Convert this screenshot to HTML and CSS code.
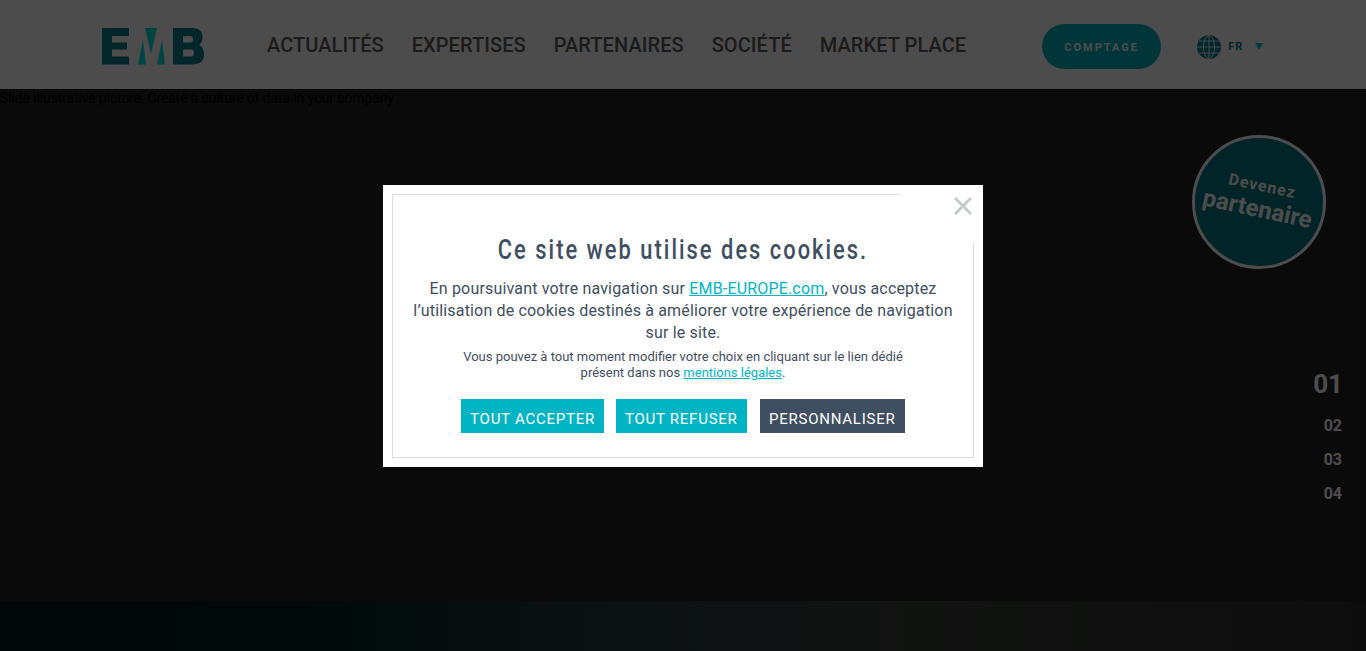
FILE: index.html
```html
<!DOCTYPE html>
<html lang="fr">

<head>
    <meta charset="UTF-8">
    <meta name="viewport" content="width=device-width, initial-scale=1.0">
    <title>EMB</title>
    <link rel="stylesheet" href="styles.css">
</head>

<body>
    <!-- en-tete -->
    <header class="header">
        <svg class="logo" width="103" height="37" viewBox="0 0 103 37">
            <path fill="#08808c" d="M0 0H27V8H10V14.500H25V21.500H10V28.500H27V36.500H0Z" />
            <path fill="#00e0e6" d="M43 0H55L49 26ZM41 12L44 36.500H36ZM60 12L63 36.500H55Z" />
            <path fill="#08808c" d="M71 0H90C98 0 100.500 4 100.500 9C100.500 13 99 16 97 17C100 18 102 21 102 26C102 33 98 36.500 90 36.500H71ZM81 8V14.500H88C90 14.500 91 13.500 91 11.200C91 9 90 8 88 8ZM81 21.500V28.500H89C91 28.500 92 27.500 92 25C92 22.500 91 21.500 89 21.500Z" />
        </svg>
        <nav class="nav">
            <a href="#">ACTUALITÉS</a>
            <a href="#">EXPERTISES</a>
            <a href="#">PARTENAIRES</a>
            <a href="#">SOCIÉTÉ</a>
            <a href="#">MARKET PLACE</a>
        </nav>
        <a class="count-btn" href="#">COMPTAGE</a>
        <div class="lang">
            <svg class="globe" width="24" height="24" viewBox="0 0 24 24">
                <circle cx="12" cy="12" r="12" fill="#08808c" />
                <g fill="none" stroke="#fff" stroke-width=".9">
                    <ellipse cx="12" cy="12" rx="5.500" ry="11.500" />
                    <path d="M12 0V24M0 12H24M2 6H22M2 18H22" />
                </g>
            </svg>
            <span class="lang-code">FR</span>
            <span class="lang-arrow"></span>
        </div>
    </header>

    <!-- slider -->
    <main class="slider">
        <p class="slide-alt">Slide illustrative picture: Create a culture of data in your company</p>
        <a class="partner" href="#">
            <span class="partner-text">
                <span class="partner-small">Devenez</span>
                <span class="partner-big">partenaire</span>
            </span>
        </a>
        <ul class="pager">
            <li class="active">01</li>
            <li>02</li>
            <li>03</li>
            <li>04</li>
        </ul>
        <div class="strip"></div>
    </main>

    <!-- fenetre cookies -->
    <div class="overlay">
        <div class="modal">
            <button class="close" type="button" aria-label="Fermer">
                <svg width="20" height="20" viewBox="0 0 20 20">
                    <path d="M2 2L18 18M18 2L2 18" stroke="#c6cbcd" stroke-width="3" fill="none" />
                </svg>
            </button>
            <div class="modal-box">
                <h2 class="modal-title">Ce site web utilise des cookies.</h2>
                <p class="modal-text">En poursuivant votre navigation sur <a href="#">EMB-EUROPE.com</a>, vous acceptez l’utilisation de cookies destinés à améliorer votre expérience de navigation sur le site.</p>
                <p class="modal-small">Vous pouvez à tout moment modifier votre choix en cliquant sur le lien dédié<br>présent dans nos <a href="#">mentions légales</a>.</p>
                <div class="modal-btns">
                    <a class="btn" href="#">TOUT ACCEPTER</a>
                    <a class="btn" href="#">TOUT REFUSER</a>
                    <a class="btn btn-dark" href="#">PERSONNALISER</a>
                </div>
            </div>
        </div>
    </div>
</body>

</html>
```

FILE: styles.css
```css
* {
    margin: 0;
    padding: 0;
    box-sizing: border-box;
    list-style-type: none;
}

html,
body {
    height: 100%;
    overflow: hidden;
}

body {
    display: flex;
    flex-direction: column;
    font-family: "Roboto", "Liberation Sans", sans-serif;
    background-color: #242424;
}

a {
    text-decoration: none;
}

/* en-tete */
.header {
    display: flex;
    align-items: center;
    flex: none;
    height: 90px;
    padding: 4px 0 0 102px;
    border-bottom: 1px solid #242424;
    background-color: #fff;
}

.logo {
    flex: none;
}

.nav {
    display: flex;
    gap: 28px;
    margin-left: 62px;
    margin-bottom: 4px;
}

.nav a {
    color: #5a5a5a;
    font-size: 20px;
    font-weight: 500;
    letter-spacing: .07px;
    white-space: nowrap;
}

.count-btn {
    display: flex;
    align-items: center;
    justify-content: center;
    width: 119px;
    height: 45px;
    margin-left: 76px;
    padding-top: 2px;
    border-radius: 23px;
    background-color: #00b4c3;
    color: #fff;
    font-size: 11px;
    font-weight: 700;
    letter-spacing: 2px;
}

.lang {
    display: flex;
    align-items: center;
    margin-left: 36px;
}

.lang-code {
    margin-left: 7px;
    color: #08808c;
    font-size: 11px;
    font-weight: 700;
    letter-spacing: 1px;
}

.lang-arrow {
    width: 0;
    height: 0;
    margin-left: 12px;
    border-left: 4.500px solid transparent;
    border-right: 4.500px solid transparent;
    border-top: 7px solid #00c8d8;
}

/* slider */
.slider {
    position: relative;
    flex: 1;
}

.slide-alt {
    color: #000;
    font-size: 14px;
    line-height: 17px;
    letter-spacing: -.13px;
}

.partner {
    position: absolute;
    top: 45px;
    left: 1192px;
    display: flex;
    align-items: center;
    justify-content: center;
    width: 134px;
    height: 134px;
    border: 3px solid #fff;
    border-radius: 50%;
    background-color: #067a85;
    color: #fff;
}

.partner-text {
    display: flex;
    flex-direction: column;
    align-items: center;
    margin-bottom: 7px;
    transform: rotate(12deg);
    font-weight: 700;
}

.partner-small {
    font-size: 16px;
    line-height: 20px;
    letter-spacing: 1px;
}

.partner-big {
    font-size: 24px;
    line-height: 26px;
}

.pager {
    position: absolute;
    top: 276px;
    right: 24px;
    display: flex;
    flex-direction: column;
    align-items: flex-end;
    color: #fff;
    font-size: 16px;
    font-weight: 700;
}

.pager li {
    height: 34px;
    line-height: 34px;
}

.pager .active {
    height: 43px;
    margin-right: -1px;
    font-size: 26px;
    line-height: 36px;
}

.strip {
    position: absolute;
    left: 0;
    right: 0;
    bottom: 0;
    height: 50px;
    background: linear-gradient(to right, #001b1b 0%, #00201f 22%, #28393c 45%, #3c423c 65%, #2b2b2b 100%);
}

/* fenetre cookies */
.overlay {
    position: fixed;
    top: 0;
    left: 0;
    right: 0;
    bottom: 0;
    display: flex;
    justify-content: center;
    padding-top: 185px;
    background-color: rgba(0, 0, 0, .7);
}

.modal {
    position: relative;
    width: 600px;
    height: 282px;
    padding: 9px;
    background-color: #fff;
    color: #3f4e60;
}

.modal-box {
    height: 264px;
    padding: 40px 20px 0;
    border: 1px solid #ddd;
    text-align: center;
}

.close {
    position: absolute;
    top: 0;
    right: 0;
    display: flex;
    justify-content: flex-end;
    width: 83px;
    height: 58px;
    padding: 11px 10px 0 0;
    border: 0;
    background-color: #fff;
}

/* pas de police condensee installee, on resserre le titre */
.modal-title {
    font-size: 28px;
    font-weight: 500;
    line-height: 30px;
    letter-spacing: 2.600px;
    white-space: nowrap;
    transform: scaleX(.78);
}

.modal-text {
    margin-top: 13px;
    font-size: 16px;
    line-height: 22px;
    letter-spacing: .17px;
}

.modal-text a,
.modal-small a {
    color: #00b4c3;
    text-decoration: underline;
}

.modal-small {
    margin-top: 5px;
    font-size: 13px;
    line-height: 16px;
}

.modal-btns {
    display: flex;
    justify-content: center;
    gap: 12px;
    margin-top: 18px;
}

.btn {
    display: flex;
    align-items: center;
    height: 34px;
    padding: 5px 9px 0;
    background-color: #00b4c3;
    color: #fff;
    font-size: 15px;
    letter-spacing: .75px;
}

.btn-dark {
    margin-left: 1px;
    padding: 5px 9.500px 0;
    background-color: #3f4e60;
}
```
